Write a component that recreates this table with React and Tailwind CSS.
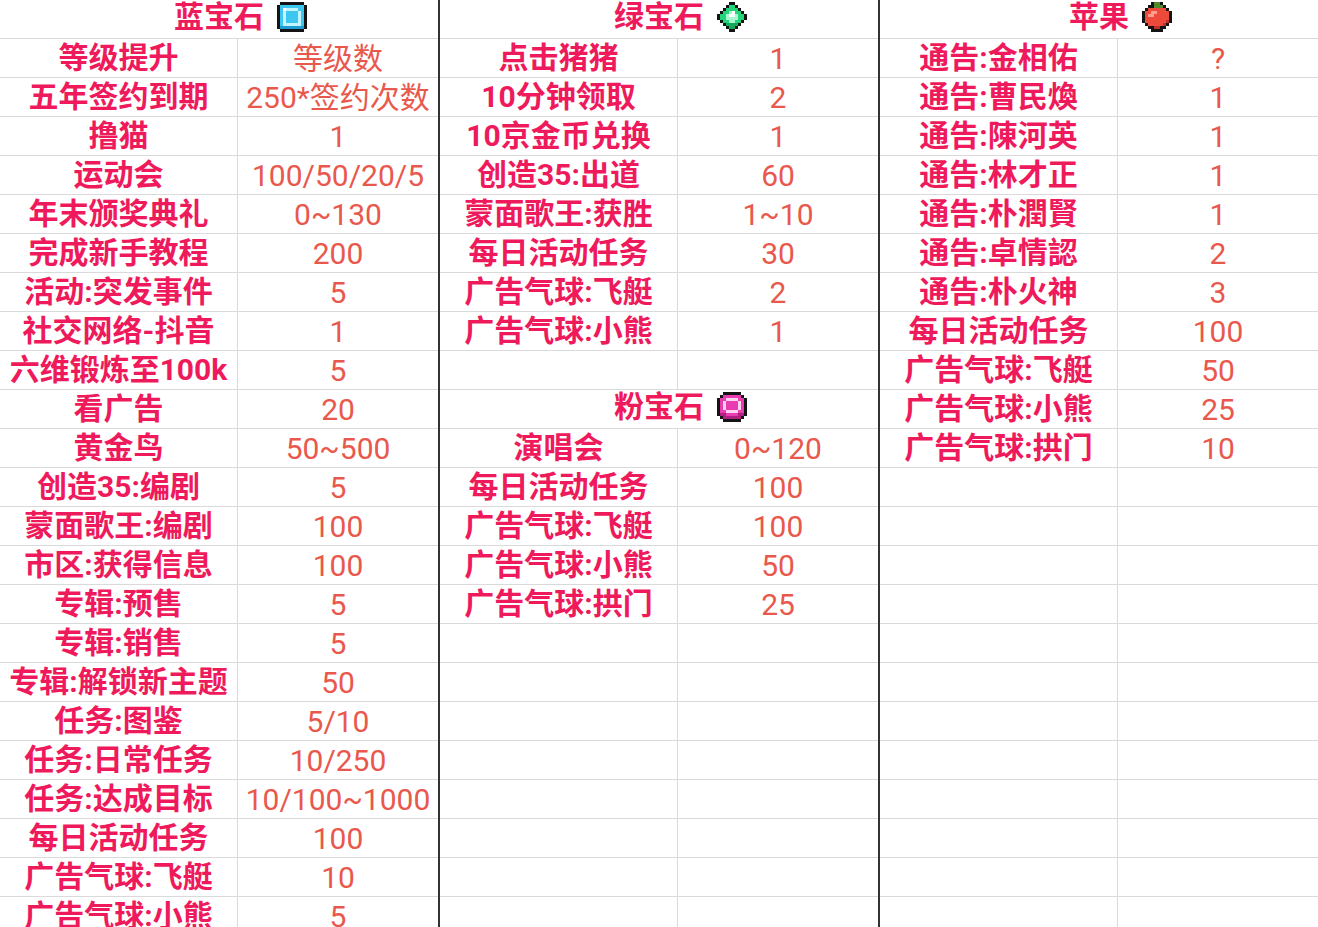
const ICONS = {
  blue: {
    colors: { K: '#141414', c: '#3cc6f0', l: '#c4f5ff', w: '#ffffff', d: '#1e9cd4' },
    grid: [
      '.KKKKKKKK.',
      'KccccccccK',
      'KcwllllccK',
      'KclcccclcK',
      'KclcccclcK',
      'KclcccclcK',
      'KclcccclcK',
      'KcllllllcK',
      'KddddddddK',
      '.KKKKKKKK.',
    ],
  },
  green: {
    colors: { K: '#141414', g: '#22d47a', l: '#a8f7cf', w: '#ffffff', d: '#12a85a' },
    grid: [
      '....KK....',
      '...KggK...',
      '..KggggK..',
      '.KgglwggK.',
      'KgglwwlggK',
      'KggllllggK',
      '.KggllggK.',
      '..KddddK..',
      '...KddK...',
      '....KK....',
    ],
  },
  apple: {
    colors: { K: '#141414', r: '#ee4a3c', p: '#ff9d8c', d: '#c0302a', G: '#4f8a2c' },
    grid: [
      '...KGGK...',
      '..KKGGGK..',
      '.KrrrrrrK.',
      'KrrpprrrrK',
      'KrpprrrrrK',
      'KrrrrrrrrK',
      'KrrrrrrrdK',
      '.KrrrrrdK.',
      '..KKddKK..',
      '...KKKK...',
    ],
  },
  pink: {
    colors: { K: '#141414', p: '#e83cb0', w: '#ffd2f2', d: '#b02080' },
    grid: [
      '..KKKKKK..',
      '.KppppppK.',
      'KppwwwwppK',
      'KpwppppwpK',
      'KpwppppwpK',
      'KpwppppwpK',
      'KppwwwwppK',
      'KddppppddK',
      '.KddddddK.',
      '..KKKKKK..',
    ],
  },
};

function PixelIcon({ name }) {
  const { colors, grid } = ICONS[name];
  return (
    <svg viewBox="0 0 10 10" className="w-[30px] h-[30px]" shapeRendering="crispEdges">
      {grid.flatMap((row, y) =>
        row.split('').map((ch, x) =>
          ch === '.' ? null : <rect key={`${x}-${y}`} x={x} y={y} width="1" height="1" fill={colors[ch]} />
        )
      )}
    </svg>
  );
}

const COL_BLUE = [
  { header: '蓝宝石', icon: 'blue' },
  ['等级提升', '等级数'],
  ['五年签约到期', '250*签约次数'],
  ['撸猫', '1'],
  ['运动会', '100/50/20/5'],
  ['年末颁奖典礼', '0~130'],
  ['完成新手教程', '200'],
  ['活动:突发事件', '5'],
  ['社交网络-抖音', '1'],
  ['六维锻炼至100k', '5'],
  ['看广告', '20'],
  ['黄金鸟', '50~500'],
  ['创造35:编剧', '5'],
  ['蒙面歌王:编剧', '100'],
  ['市区:获得信息', '100'],
  ['专辑:预售', '5'],
  ['专辑:销售', '5'],
  ['专辑:解锁新主题', '50'],
  ['任务:图鉴', '5/10'],
  ['任务:日常任务', '10/250'],
  ['任务:达成目标', '10/100~1000'],
  ['每日活动任务', '100'],
  ['广告气球:飞艇', '10'],
  ['广告气球:小熊', '5'],
];

const COL_GREEN = [
  { header: '绿宝石', icon: 'green' },
  ['点击猪猪', '1'],
  ['10分钟领取', '2'],
  ['10京金币兑换', '1'],
  ['创造35:出道', '60'],
  ['蒙面歌王:获胜', '1~10'],
  ['每日活动任务', '30'],
  ['广告气球:飞艇', '2'],
  ['广告气球:小熊', '1'],
  ['', ''],
  { header: '粉宝石', icon: 'pink' },
  ['演唱会', '0~120'],
  ['每日活动任务', '100'],
  ['广告气球:飞艇', '100'],
  ['广告气球:小熊', '50'],
  ['广告气球:拱门', '25'],
];

const COL_APPLE = [
  { header: '苹果', icon: 'apple' },
  ['通告:金相佑', '?'],
  ['通告:曹民煥', '1'],
  ['通告:陳河英', '1'],
  ['通告:林才正', '1'],
  ['通告:朴潤賢', '1'],
  ['通告:卓情認', '2'],
  ['通告:朴火神', '3'],
  ['每日活动任务', '100'],
  ['广告气球:飞艇', '50'],
  ['广告气球:小熊', '25'],
  ['广告气球:拱门', '10'],
];

const TOTAL_ROWS = 24;

function Column({ items, className }) {
  const rows = [...items];
  while (rows.length < TOTAL_ROWS) rows.push(['', '']);

  return (
    <div className={`flex flex-col ${className}`}>
      {rows.map((row, i) =>
        row.header ? (
          <div key={i} className="h-[39px] shrink-0 border-b border-[#dadada] flex items-center justify-center">
            <span className="relative font-bold text-[30px] leading-none text-[#ee1a5c] -mt-[4px]">
              {row.header}
              <span className="absolute left-full top-1/2 -translate-y-1/2 ml-[13px]">
                <PixelIcon name={row.icon} />
              </span>
            </span>
          </div>
        ) : (
          <div key={i} className="h-[39px] shrink-0 border-b border-[#dadada] flex">
            <div className="w-[238px] shrink-0 border-r border-[#dadada] flex items-center justify-center pb-[1px] font-bold text-[30px] leading-none text-[#ee1a5c] whitespace-nowrap">
              {row[0]}
            </div>
            <div className="flex-1 flex items-center justify-center pt-[2px] text-[30px] leading-none text-[#e9584c] whitespace-nowrap">
              {row[1]}
            </div>
          </div>
        )
      )}
    </div>
  );
}

export default function App() {
  return (
    <div
      className="w-[1318px] h-[927px] overflow-hidden bg-white flex"
      style={{ fontFamily: 'Roboto, "Noto Sans CJK SC", sans-serif' }}
    >
      <Column items={COL_BLUE} className="w-[440px] shrink-0 border-r-2 border-[#333]" />
      <Column items={COL_GREEN} className="w-[440px] shrink-0 border-r-2 border-[#333]" />
      <Column items={COL_APPLE} className="flex-1" />
    </div>
  );
}
